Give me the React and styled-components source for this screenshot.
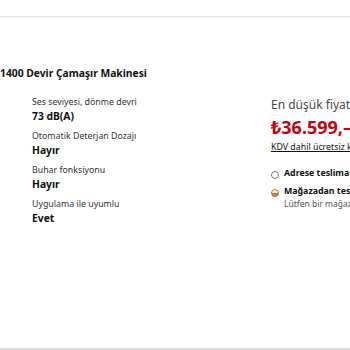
import React from 'react';
import styled, { createGlobalStyle } from 'styled-components';

const GlobalStyle = createGlobalStyle`
  html, body {
    margin: 0;
    padding: 0;
    background: #fff;
    overflow: hidden;
  }
  body {
    font-family: 'Noto Sans', 'Open Sans', sans-serif;
    color: #111;
  }
`;

const specs = [
  { label: 'Ses seviyesi, dönme devri', value: '73 dB(A)' },
  { label: 'Otomatik Deterjan Dozajı', value: 'Hayır' },
  { label: 'Buhar fonksiyonu', value: 'Hayır' },
  { label: 'Uygulama ile uyumlu', value: 'Evet' },
];

function App() {
  return (
    <>
      <GlobalStyle />
      <Page>
        <TopBar />
        <Content>
          <Title>1400 Devir Çamaşır Makinesi</Title>
          <Columns>
            <SpecList>
              {specs.map((s) => (
                <Spec key={s.label}>
                  <SpecLabel>{s.label}</SpecLabel>
                  <SpecValue>{s.value}</SpecValue>
                </Spec>
              ))}
            </SpecList>
            <PriceBox>
              <PriceCaption>En düşük fiyat</PriceCaption>
              <Price>₺36.599,–</Price>
              <TaxNote>KDV dahil ücretsiz kargo</TaxNote>
              <Options>
                <Option>
                  <Radio />
                  <div>
                    <OptionTitle>Adrese teslimat</OptionTitle>
                  </div>
                </Option>
                <Option>
                  <Radio half />
                  <div>
                    <OptionTitle>Mağazadan teslim al</OptionTitle>
                    <OptionHint>Lütfen bir mağaza seçin</OptionHint>
                  </div>
                </Option>
              </Options>
            </PriceBox>
          </Columns>
        </Content>
        <BottomBar />
      </Page>
    </>
  );
}

const Page = styled.div`
  width: 350px;
  height: 350px;
  display: flex;
  flex-direction: column;
  overflow: hidden;
`;

const TopBar = styled.div`
  height: 16px;
  flex-shrink: 0;
  border-bottom: 1px solid #e3e3e3;
  box-shadow: 0 1px 1px #f4f4f4;
`;

const Content = styled.div`
  flex: 1;
  padding-top: 49px;
`;

const BottomBar = styled.div`
  height: 2px;
  flex-shrink: 0;
  background: #dcdcdc;
`;

const Title = styled.h2`
  margin: 0;
  font-size: 10.3px;
  line-height: 14px;
  font-weight: 700;
  color: #111;
  white-space: nowrap;
`;

const Columns = styled.div`
  display: grid;
  grid-template-columns: 271px 1fr;
  margin-top: 14px;
`;

const SpecList = styled.div`
  display: flex;
  flex-direction: column;
  gap: 6.2px;
  padding-left: 32px;
  padding-top: 1.5px;
`;

const Spec = styled.div`
  display: flex;
  flex-direction: column;
`;

const SpecLabel = styled.span`
  font-size: 8.8px;
  line-height: 13px;
  color: #333;
  white-space: nowrap;
`;

const SpecValue = styled.span`
  font-size: 10.3px;
  line-height: 15px;
  font-weight: 700;
  color: #111;
  white-space: nowrap;
`;

const PriceBox = styled.div`
  display: flex;
  flex-direction: column;
  white-space: nowrap;
  padding-top: 3px;
`;

const PriceCaption = styled.span`
  font-size: 12px;
  line-height: 16px;
  color: #484848;
`;

const Price = styled.span`
  font-size: 18px;
  line-height: 24px;
  font-weight: 700;
  color: #cc0008;
  margin-top: 2px;
`;

const TaxNote = styled.span`
  font-size: 8.8px;
  line-height: 12px;
  color: #111;
  text-decoration: underline;
  margin-top: 2px;
`;

const Options = styled.div`
  display: flex;
  flex-direction: column;
  gap: 5px;
  margin-top: 14px;
`;

const Option = styled.div`
  display: flex;
  align-items: flex-start;
  gap: 5px;
`;

const Radio = styled.span`
  width: 6px;
  height: 6px;
  margin-top: 3.5px;
  border-radius: 50%;
  flex-shrink: 0;
  border: 1px solid ${(p) => (p.half ? '#c96a1f' : '#777')};
  background: ${(p) =>
    p.half ? 'linear-gradient(#fff 0 45%, #d87a2a 45% 100%)' : '#fff'};
`;

const OptionTitle = styled.div`
  font-size: 8.8px;
  line-height: 13px;
  font-weight: 700;
  color: #111;
`;

const OptionHint = styled.div`
  font-size: 8.5px;
  line-height: 12px;
  color: #555;
`;

export default App;
